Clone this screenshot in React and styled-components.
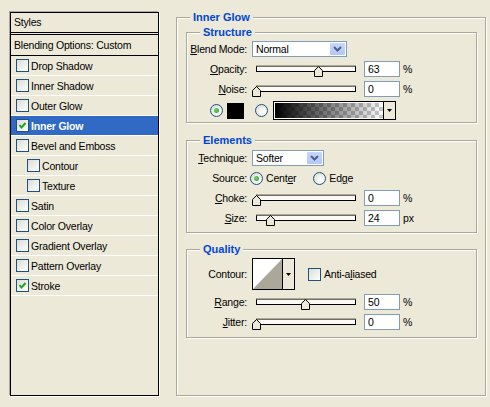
import React from 'react';
import styled, { createGlobalStyle } from 'styled-components';

const GlobalStyle = createGlobalStyle`
  html, body {
    margin: 0;
    background: #ece9d8;
  }
  body {
    font-family: "Liberation Sans", Arial, sans-serif;
    font-size: 10.5px;
    letter-spacing: -0.2px;
    color: #000;
  }
`;

const Page = styled.div`
  display: flex;
  align-items: flex-start;
  width: 490px;
  height: 407px;
  padding: 12px 0 0 10px;
  box-sizing: border-box;
`;

/* ---------- left styles list ---------- */

const StylesList = styled.div`
  width: 149px;
  height: 384px;
  box-sizing: border-box;
  border: 1px solid #000;
  box-shadow: -1px -1px 0 #aca899, 1px 1px 0 #fff;
  display: flex;
  flex-direction: column;
`;

const ListHeader = styled.div`
  height: 19px;
  line-height: 19px;
  padding-left: 3px;
  border-bottom: 1px solid #000;
  margin-bottom: 1px;
`;

const BlendingRow = styled.div`
  height: 20px;
  line-height: 20px;
  padding-left: 3px;
  border-top: 1px solid #000;
  border-bottom: 1px solid #000;
`;

const ListItem = styled.div`
  height: 19px;
  display: flex;
  align-items: center;
  gap: 2px;
  padding-left: ${p => (p.$indent ? 16 : 5)}px;
  border-bottom: 1px solid #fff;
  background: ${p => (p.$selected ? '#316ac5' : 'transparent')};
  color: ${p => (p.$selected ? '#fff' : '#000')};
  font-weight: ${p => (p.$selected ? 'bold' : 'normal')};
`;

const Box = styled.span`
  width: 13px;
  height: 13px;
  box-sizing: border-box;
  border: 1px solid #1c5180;
  background: linear-gradient(135deg, #dcdcd7 0%, #f4f4f0 70%, #fff 100%);
  display: inline-flex;
  align-items: center;
  justify-content: center;
  flex: none;
`;

const CheckBox = ({ checked }) => (
  <Box>
    {checked && (
      <svg width="9" height="9" viewBox="0 0 9 9">
        <path d="M1.5 4 L3.5 6.5 L7.5 2" stroke="#21a121" strokeWidth="2" fill="none" />
      </svg>
    )}
  </Box>
);

/* ---------- group boxes ---------- */

const Group = styled.div`
  box-sizing: border-box;
  border: 1px solid #aca899;
  box-shadow: inset 1px 1px 0 #fff, 1px 1px 0 #fff;
  margin-top: ${p => p.$top || 0}px;
  padding: ${p => p.$pad || '0'};
  height: ${p => (p.$h ? `${p.$h}px` : 'auto')};
  width: ${p => (p.$w ? `${p.$w}px` : 'auto')};
`;

const Legend = styled.div`
  display: table;
  margin: -7px 0 0 ${p => (p.$ml === undefined ? 13 : p.$ml)}px;
  padding: 0 3px;
  background: #ece9d8;
  color: #0046d5;
  font-weight: bold;
  font-size: 11px;
  letter-spacing: 0;
  line-height: 13px;
`;

const RightCol = styled.div`
  margin: 5px 0 0 17px;
`;

const Rows = styled.div`
  display: grid;
  grid-template-columns: 60px 1fr;
  column-gap: 5px;
  row-gap: 4px;
  margin-top: ${p => p.$top || 0}px;
  grid-auto-rows: 16px;
  align-items: center;
`;

const Label = styled.div`
  text-align: right;
  white-space: nowrap;
`;

const Controls = styled.div`
  display: flex;
  align-items: center;
  height: 100%;
`;

const Select = styled.div`
  width: ${p => p.$w}px;
  height: 16px;
  box-sizing: border-box;
  border: 1px solid #7f9db9;
  background: #fff;
  display: flex;
  align-items: center;
  justify-content: space-between;
  padding: 0 1px 0 3px;
`;

const SelectButton = styled.span`
  width: 15px;
  height: 12px;
  border-radius: 1px;
  background: linear-gradient(#c6d6fc, #b2c8f8);
  display: flex;
  align-items: center;
  justify-content: center;
`;

const DropSelect = ({ w, value }) => (
  <Select $w={w}>
    <span>{value}</span>
    <SelectButton>
      <svg width="9" height="6" viewBox="0 0 9 6">
        <path d="M1 1 L4.5 4.5 L8 1" stroke="#4d6185" strokeWidth="2" fill="none" />
      </svg>
    </SelectButton>
  </Select>
);

const SliderWrap = styled.div`
  position: relative;
  width: 107px;
  height: 16px;
  flex: none;
`;

const Track = styled.div`
  margin: 5px 3px 0 4px;
  height: 6px;
  box-sizing: border-box;
  border: 1px solid #000;
  border-top-color: #716f64;
  background: #fbfaf6;
  box-shadow: 0 -1px 0 #aca899;
`;

const Thumb = styled.svg`
  position: absolute;
  top: 5px;
`;

const Slider = ({ pos }) => (
  <SliderWrap>
    <Track />
    <Thumb width="10" height="11" viewBox="0 0 10 11" style={{ left: Math.round(pos * 0.98) }}>
      <path d="M0.5 10.5 V4.5 L4.5 0.5 L8.5 4.5 V10.5 Z" fill="#ece9d8" stroke="#000" />
    </Thumb>
  </SliderWrap>
);

const Input = styled.div`
  width: 36px;
  height: 16px;
  margin-left: 5px;
  box-sizing: border-box;
  border: 1px solid #7f9db9;
  background: #fff;
  padding-left: 3px;
  line-height: 14px;
`;

const Unit = styled.span`
  margin-left: 3px;
`;

const SliderRow = ({ pos, value, unit }) => (
  <Controls>
    <Slider pos={pos} />
    <Input>{value}</Input>
    <Unit>{unit}</Unit>
  </Controls>
);

const RadioDot = styled.span`
  width: 13px;
  height: 13px;
  box-sizing: border-box;
  border-radius: 50%;
  border: 1px solid #1c5180;
  background: radial-gradient(circle at 65% 65%, #fff 0%, #f2f2ee 40%, #d2d2cb 100%);
  display: inline-flex;
  align-items: center;
  justify-content: center;
  flex: none;
  margin-left: ${p => p.$ml || 0}px;
  &::after {
    content: '';
    display: ${p => (p.$on ? 'block' : 'none')};
    width: 5px;
    height: 5px;
    border-radius: 50%;
    background: radial-gradient(circle at 40% 40%, #74d374, #21a121);
  }
`;

const ColorRow = styled.div`
  grid-column: 1 / 3;
  height: 19px;
  margin-top: 3px;
  padding-left: 23px;
  display: flex;
  align-items: center;
`;

const Swatch = styled.span`
  width: 17px;
  height: 16px;
  margin-left: 4px;
  background: #000;
`;

const GradientPicker = styled.div`
  width: 123px;
  height: 19px;
  margin-left: 5px;
  box-sizing: border-box;
  border: 1px solid #000;
  display: flex;
`;

const GradientFill = styled.div`
  flex: 1;
  border: 1px solid #fff;
  border-right: none;
  background-image: linear-gradient(to right, #000, rgba(0, 0, 0, 0)),
    repeating-conic-gradient(#c8c8c8 0% 25%, #fff 0% 50%);
  background-size: 100% 100%, 8px 8px;
`;

const ArrowPart = styled.div`
  width: 11px;
  border-left: 1px solid #000;
  background: #ece9d8;
  display: flex;
  align-items: center;
  justify-content: center;
`;

const DownArrow = () => (
  <svg width="5" height="3" viewBox="0 0 5 3">
    <path d="M0 0 H5 L2.5 3 Z" fill="#000" />
  </svg>
);

const RadioLabel = styled.span`
  margin-left: 3px;
`;

const ContourRow = styled.div`
  display: grid;
  grid-template-columns: 60px auto auto;
  column-gap: 5px;
  align-items: center;
  justify-content: start;
  height: 32px;
  margin-top: 2px;
`;

const ContourBox = styled.div`
  width: 43px;
  height: 32px;
  box-sizing: border-box;
  border: 1px solid #000;
  display: flex;
  background: #fff;
`;

const ContourPreview = styled.svg`
  flex: 1;
  display: block;
`;

const AntiAlias = styled.label`
  display: flex;
  align-items: center;
  gap: 3px;
  margin-left: 8px;
`;

const StyleItems = [
  { name: 'Drop Shadow' },
  { name: 'Inner Shadow' },
  { name: 'Outer Glow' },
  { name: 'Inner Glow', checked: true, selected: true },
  { name: 'Bevel and Emboss' },
  { name: 'Contour', indent: true },
  { name: 'Texture', indent: true },
  { name: 'Satin' },
  { name: 'Color Overlay' },
  { name: 'Gradient Overlay' },
  { name: 'Pattern Overlay' },
  { name: 'Stroke', checked: true },
];

export default function App() {
  return (
    <>
      <GlobalStyle />
      <Page>
        <StylesList>
          <ListHeader>Styles</ListHeader>
          <BlendingRow>Blending Options: Custom</BlendingRow>
          {StyleItems.map(item => (
            <ListItem key={item.name} $indent={item.indent} $selected={item.selected}>
              <CheckBox checked={item.checked} />
              <span>{item.name}</span>
            </ListItem>
          ))}
        </StylesList>

        <RightCol>
          <Group $w={310} $h={379} $pad="0 8px 0 9px">
            <Legend $ml={4}>Inner Glow</Legend>

            <Group $top={8} $pad="0 0 5px 0">
              <Legend>Structure</Legend>
              <Rows $top={2}>
                <Label><u>B</u>lend Mode:</Label>
                <Controls><DropSelect w={95} value="Normal" /></Controls>
                <Label><u>O</u>pacity:</Label>
                <SliderRow pos={63} value="63" unit="%" />
                <Label><u>N</u>oise:</Label>
                <SliderRow pos={0} value="0" unit="%" />
                <ColorRow>
                  <RadioDot $on />
                  <Swatch />
                  <RadioDot $ml={11} />
                  <GradientPicker>
                    <GradientFill />
                    <ArrowPart><DownArrow /></ArrowPart>
                  </GradientPicker>
                </ColorRow>
              </Rows>
            </Group>

            <Group $top={17} $pad="0 0 6px 0">
              <Legend>Elements</Legend>
              <Rows $top={3}>
                <Label><u>T</u>echnique:</Label>
                <Controls><DropSelect w={72} value="Softer" /></Controls>
                <Label>Source:</Label>
                <Controls>
                  <RadioDot $on $ml={-2} />
                  <RadioLabel>Cent<u>e</u>r</RadioLabel>
                  <RadioDot $ml={17} />
                  <RadioLabel>Ed<u>g</u>e</RadioLabel>
                </Controls>
                <Label><u>C</u>hoke:</Label>
                <SliderRow pos={0} value="0" unit="%" />
                <Label><u>S</u>ize:</Label>
                <SliderRow pos={14} value="24" unit="px" />
              </Rows>
            </Group>

            <Group $top={16} $pad="0 0 7px 0">
              <Legend>Quality</Legend>
              <ContourRow>
                <Label>Contour:</Label>
                <ContourBox>
                  <ContourPreview viewBox="0 0 30 30" preserveAspectRatio="none">
                    <polygon points="0,30 30,0 30,30" fill="#aca899" />
                  </ContourPreview>
                  <ArrowPart><DownArrow /></ArrowPart>
                </ContourBox>
                <AntiAlias>
                  <CheckBox />
                  <span>Anti-a<u>l</u>iased</span>
                </AntiAlias>
              </ContourRow>
              <Rows $top={4}>
                <Label><u>R</u>ange:</Label>
                <SliderRow pos={50} value="50" unit="%" />
                <Label><u>J</u>itter:</Label>
                <SliderRow pos={0} value="0" unit="%" />
              </Rows>
            </Group>
          </Group>
        </RightCol>
      </Page>
    </>
  );
}
